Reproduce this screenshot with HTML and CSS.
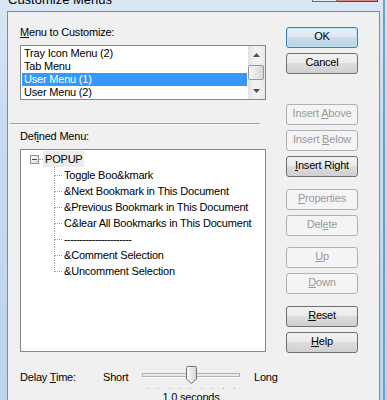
FILE: index.html
```html
<!DOCTYPE html>
<html lang="en">
<head>
    <meta charset="UTF-8">
    <meta name="viewport" content="width=device-width, initial-scale=1.0">
    <title>Customize Menus</title>
    <link rel="stylesheet" href="styles.css">
</head>
<body>
    <div class="window">
        <div class="titlebar">
            <div class="title">Customize Menus</div>
            <div class="caption-buttons">
                <div class="cap-help"></div>
                <div class="cap-close"></div>
            </div>
        </div>

        <div class="client">
            <div class="main">
                <div class="left">
                    <div class="label"><u>M</u>enu to Customize:</div>
                    <div class="listbox">
                        <div class="list-items">
                            <div class="list-item">Tray Icon Menu (2)</div>
                            <div class="list-item">Tab Menu</div>
                            <div class="list-item selected">User Menu (1)</div>
                            <div class="list-item">User Menu (2)</div>
                        </div>
                        <div class="scrollbar">
                            <div class="sb-arrow">
                                <svg width="7" height="4" viewBox="0 0 7 4"><polygon points="3.5,0 7,4 0,4" fill="#505050"/></svg>
                            </div>
                            <div class="sb-track"><div class="sb-thumb"></div></div>
                            <div class="sb-arrow">
                                <svg width="7" height="4" viewBox="0 0 7 4"><polygon points="0,0 7,0 3.5,4" fill="#505050"/></svg>
                            </div>
                        </div>
                    </div>

                    <div class="separator"></div>

                    <div class="label">Def<u>i</u>ned Menu:</div>
                    <div class="tree">
                        <div class="tree-row">
                            <svg class="expander" width="9" height="9" viewBox="0 0 9 9">
                                <defs>
                                    <linearGradient id="exp" x1="0" y1="0" x2="1" y2="1">
                                        <stop offset="0" stop-color="#ffffff"/>
                                        <stop offset="1" stop-color="#d8d8d8"/>
                                    </linearGradient>
                                </defs>
                                <rect x="0.5" y="0.5" width="8" height="8" fill="url(#exp)" stroke="#919191"/>
                                <rect x="2" y="4" width="5" height="1" fill="#2b4c7e"/>
                            </svg>
                            <span class="root-line"></span>
                            <span class="node selected">POPUP</span>
                        </div>
                        <div class="tree-row"><span class="elbow"><span class="elbow-top"></span><span class="elbow-bottom"></span></span><span class="node">Toggle Boo&amp;kmark</span></div>
                        <div class="tree-row"><span class="elbow"><span class="elbow-top"></span><span class="elbow-bottom"></span></span><span class="node">&amp;Next Bookmark in This Document</span></div>
                        <div class="tree-row"><span class="elbow"><span class="elbow-top"></span><span class="elbow-bottom"></span></span><span class="node">&amp;Previous Bookmark in This Document</span></div>
                        <div class="tree-row"><span class="elbow"><span class="elbow-top"></span><span class="elbow-bottom"></span></span><span class="node">C&amp;lear All Bookmarks in This Document</span></div>
                        <div class="tree-row"><span class="elbow"><span class="elbow-top"></span><span class="elbow-bottom"></span></span><span class="node sep">----------------------</span></div>
                        <div class="tree-row"><span class="elbow"><span class="elbow-top"></span><span class="elbow-bottom"></span></span><span class="node">&amp;Comment Selection</span></div>
                        <div class="tree-row last"><span class="elbow"><span class="elbow-top"></span><span class="elbow-bottom"></span></span><span class="node">&amp;Uncomment Selection</span></div>
                    </div>
                </div>

                <div class="buttons">
                    <div class="btn-group">
                        <button class="btn default">OK</button>
                        <button class="btn">Cancel</button>
                    </div>
                    <div class="btn-group group-insert">
                        <button class="btn" disabled>Insert <u>A</u>bove</button>
                        <button class="btn" disabled>Insert <u>B</u>elow</button>
                        <button class="btn"><u>I</u>nsert Right</button>
                    </div>
                    <div class="btn-group group-props">
                        <button class="btn" disabled><u>P</u>roperties</button>
                        <button class="btn" disabled>Del<u>e</u>te</button>
                    </div>
                    <div class="btn-group group-move">
                        <button class="btn" disabled><u>U</u>p</button>
                        <button class="btn" disabled><u>D</u>own</button>
                    </div>
                    <div class="btn-group group-help">
                        <button class="btn"><u>R</u>eset</button>
                        <button class="btn"><u>H</u>elp</button>
                    </div>
                </div>
            </div>

            <div class="delay">
                <div class="delay-label">Delay <u>T</u>ime:</div>
                <div class="short">Short</div>
                <div class="slider">
                    <svg width="100" height="27" viewBox="0 0 100 27">
                        <defs>
                            <linearGradient id="thumb" x1="0" y1="0" x2="1" y2="0">
                                <stop offset="0" stop-color="#fbfbfb"/>
                                <stop offset="1" stop-color="#d6d6d6"/>
                            </linearGradient>
                        </defs>
                        <rect x="1.5" y="9.5" width="97" height="3" fill="#e7e9ea" stroke="#b3b3b3"/>
                        <rect x="2" y="13" width="97" height="1" fill="#ffffff"/>
                        <path d="M45.5,3.5 a1,1 0 0 1 1,-1 h8 a1,1 0 0 1 1,1 v11.5 l-5,4.5 l-5,-4.5 z" fill="url(#thumb)" stroke="#727272"/>
                        <g fill="#a8a8a8">
                            <rect x="6" y="24" width="1" height="1"/>
                            <rect x="17" y="24" width="1" height="1"/>
                            <rect x="28" y="24" width="1" height="1"/>
                            <rect x="38" y="24" width="1" height="1"/>
                            <rect x="49" y="24" width="1" height="1"/>
                            <rect x="60" y="24" width="1" height="1"/>
                            <rect x="71" y="24" width="1" height="1"/>
                            <rect x="82" y="24" width="1" height="1"/>
                            <rect x="93" y="24" width="1" height="1"/>
                        </g>
                    </svg>
                    <div class="slider-value">1.0 seconds</div>
                </div>
                <div class="long">Long</div>
            </div>
        </div>
    </div>
</body>
</html>
```

FILE: styles.css
```css
body {
    margin: 0;
    font-family: "Liberation Sans", Arial, sans-serif;
    font-size: 11px;
    letter-spacing: -0.2px;
    color: #000;
}

.window {
    width: 387px;
    height: 400px;
    overflow: hidden;
    background:
        linear-gradient(to right, transparent 383px, #5aa7dc 383px, #5aa7dc 385px, transparent 385px),
        linear-gradient(to bottom, #d9e7f5 0%, #c8dbef 30%, #bdd4ec 100%);
}

.titlebar {
    display: flex;
    height: 11px;
    overflow: hidden;
}

.title {
    flex: 1;
    margin: -8px 0 0 8px;
    font-size: 13px;
    line-height: 15px;
    letter-spacing: 0;
}

.caption-buttons {
    display: flex;
    align-items: flex-start;
    margin-right: 9px;
}

.cap-help {
    width: 23px;
    height: 1px;
    background: #dfe7f0;
    border: 1px solid #5f6f82;
    border-top: 0;
}

.cap-close {
    width: 40px;
    height: 1px;
    background: #d98c7e;
    border: 1px solid #6e3b34;
    border-top: 0;
    border-left: 0;
}

.client {
    margin-left: 7px;
    width: 371px;
    height: 388px;
    background: #f0f0f0;
    border: 1px solid #7d8b99;
    border-bottom: 0;
}

.main {
    display: flex;
    align-items: flex-start;
}

.left {
    width: 246px;
    padding: 14px 0 0 12px;
}

.label {
    height: 13px;
    line-height: 13px;
    margin-bottom: 6px;
    white-space: nowrap;
}

.listbox {
    display: flex;
    height: 55px;
    box-sizing: border-box;
    border: 1px solid #828790;
    background: #fff;
}

.list-items {
    flex: 1;
    padding: 1px;
    overflow: hidden;
}

.list-item {
    height: 13px;
    line-height: 13px;
    padding-left: 2px;
    white-space: nowrap;
}

.list-item.selected {
    background: #3399ff;
    color: #fff;
}

.scrollbar {
    width: 17px;
    display: flex;
    flex-direction: column;
    background: linear-gradient(to right, #e2e2e2, #f1f1f1 35%, #f1f1f1 70%, #e6e6e6);
}

.sb-arrow {
    height: 17px;
    display: flex;
    align-items: center;
    justify-content: center;
}

.sb-arrow svg {
    display: block;
}

.sb-track {
    flex: 1;
    padding: 2px 1px 2px 0;
}

.sb-thumb {
    height: 15px;
    box-sizing: border-box;
    border: 1px solid #979797;
    border-radius: 2px;
    background: linear-gradient(to right, #f6f6f6, #e6e6e6 50%, #d8d8d8);
}

.separator {
    width: 250px;
    margin: 23px 0 5px -10px;
    border-top: 1px solid #a0a0a0;
    border-bottom: 1px solid #fff;
}

.tree {
    height: 203px;
    box-sizing: border-box;
    border: 1px solid #828790;
    background: #fff;
    padding-top: 1px;
}

.tree-row {
    display: flex;
    align-items: center;
    height: 16px;
    line-height: 16px;
    white-space: nowrap;
}

.expander {
    display: block;
    margin-left: 9px;
}

.root-line {
    width: 4px;
    height: 0;
    border-top: 1px dotted #a0a0a0;
}

.node {
    padding: 0 1px 0 2px;
}

.node.selected {
    background: #ececec;
}

.node.sep {
    letter-spacing: -0.6px;
}

.elbow {
    display: flex;
    flex-direction: column;
    width: 8px;
    height: 16px;
    margin-left: 33px;
}

.elbow-top {
    height: 8px;
    border-left: 1px dotted #a0a0a0;
    border-bottom: 1px dotted #a0a0a0;
}

.elbow-bottom {
    height: 7px;
    border-left: 1px dotted #a0a0a0;
}

.tree-row.last .elbow-bottom {
    border-left-color: transparent;
}

.buttons {
    display: flex;
    flex-direction: column;
    width: 72px;
    margin-left: 20px;
    padding-top: 15px;
}

.btn-group {
    display: flex;
    flex-direction: column;
    gap: 5px;
}

.group-insert {
    margin-top: 30px;
}

.group-props {
    margin-top: 12px;
}

.group-move {
    margin-top: 11px;
}

.group-help {
    margin-top: 12px;
}

.btn {
    height: 21px;
    box-sizing: border-box;
    margin: 0;
    padding: 0 0 2px;
    border: 1px solid #707070;
    border-radius: 3px;
    background: linear-gradient(#f2f2f2, #ebebeb 45%, #dddddd 50%, #cfcfcf);
    font: inherit;
    letter-spacing: inherit;
    line-height: 17px;
    color: #000;
    text-align: center;
}

.btn.default {
    border-color: #3c7fb1;
    background: linear-gradient(#e8f1f7, #dbe8f1 45%, #cadcea 50%, #bcd2e3);
    box-shadow: inset 0 0 0 1px #bfe3f6;
}

.btn:disabled {
    border-color: #adb2b5;
    background: #f4f4f4;
    color: #9a9a9a;
}

.delay {
    display: flex;
    align-items: flex-start;
    margin-top: 11px;
    padding-left: 12px;
}

.delay-label {
    width: 83px;
    margin-top: 7px;
    line-height: 13px;
    white-space: nowrap;
}

.short {
    width: 38px;
    margin-top: 7px;
    line-height: 13px;
}

.slider {
    width: 100px;
    display: flex;
    flex-direction: column;
    align-items: center;
}

.slider svg {
    display: block;
}

.slider-value {
    line-height: 13px;
    white-space: nowrap;
}

.long {
    margin: 7px 0 0 13px;
    line-height: 13px;
}
```
